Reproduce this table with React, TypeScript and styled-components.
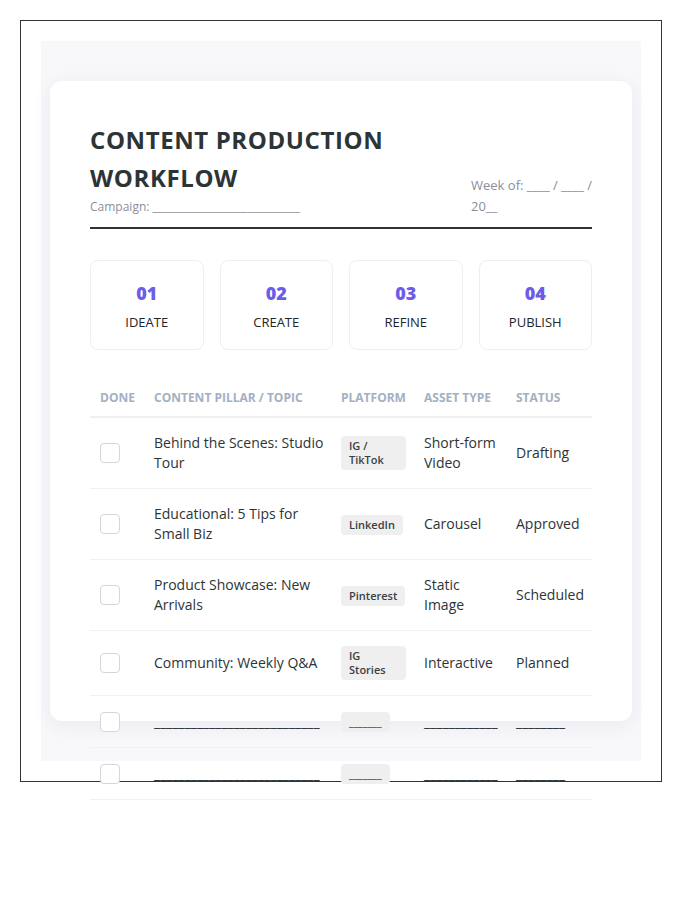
import React from "react";
import styled, { createGlobalStyle } from "styled-components";

const Global = createGlobalStyle`
  html, body { margin: 0; padding: 0; background: #ffffff; }
  body { font-family: "Open Sans", "Noto Sans", sans-serif; color: #2d3436; }
  #root { padding: 20px; }
  * { box-sizing: content-box; }
`;

const Frame = styled.div`
  width: 600px;
  padding: 20px;
  border: 1px solid #333333;
`;

const Canvas = styled.div`
  height: 640px;
  padding: 40px 9px;
  background: #f8f8fb;
`;

const Card = styled.div`
  height: 560px;
  padding: 40px;
  background: #ffffff;
  border-radius: 12px;
  box-shadow: 0 4px 20px rgba(40, 40, 80, 0.07);
`;

const Header = styled.header`
  display: flex;
  justify-content: space-between;
  align-items: flex-end;
  gap: 20px;
  padding-bottom: 10px;
  border-bottom: 2px solid #2d3436;
`;

const TitleBlock = styled.div`
  flex: 1;
`;

const Title = styled.h1`
  margin: 0;
  font-size: 24px;
  line-height: 38px;
  font-weight: 700;
  letter-spacing: 0.6px;
  color: #2d3436;
  max-width: 330px;
`;

const Meta = styled.div<{ $width?: number }>`
  font-size: 12px;
  line-height: 20px;
  color: #8a8f99;
  ${(p) => (p.$width ? `width: ${p.$width}px; font-size: 13px; line-height: 21px;` : "")}
`;

const Steps = styled.div`
  display: grid;
  grid-template-columns: repeat(4, 1fr);
  gap: 16px;
  margin-top: 31px;
`;

const Step = styled.div`
  border: 1px solid #eeeff3;
  border-radius: 8px;
  padding: 20px 0 18px;
  text-align: center;
`;

const StepNum = styled.div`
  font-size: 18px;
  line-height: 24px;
  font-weight: 800;
  color: #6c5ce7;
  margin-bottom: 8px;
`;

const StepLabel = styled.div`
  font-size: 13px;
  line-height: 18px;
  font-weight: 500;
  color: #222629;
  text-transform: uppercase;
`;

const Table = styled.table`
  width: 502px;
  margin-top: 30px;
  border-collapse: collapse;
  table-layout: fixed;
`;

const Th = styled.th`
  padding: 10px 6px 10px 10px;
  text-align: left;
  font-size: 12px;
  line-height: 16px;
  font-weight: 700;
  color: #a3b0c2;
  text-transform: uppercase;
  border-bottom: 2px solid #edf1f6;
  white-space: nowrap;
`;

const Td = styled.td`
  padding: 15px 6px 15px 10px;
  font-size: 14px;
  line-height: 20px;
  color: #2d3436;
  vertical-align: middle;
  border-bottom: 1px solid #f0f1f4;
`;

const Check = styled.div`
  width: 18px;
  height: 18px;
  border: 1px solid #d4d6da;
  border-radius: 4px;
  background: #ffffff;
`;

const Badge = styled.span`
  display: inline-block;
  max-width: 49px;
  padding: 3px 8px;
  font-size: 11px;
  line-height: 14px;
  font-weight: 600;
  color: #3a3f44;
  background: #efefef;
  border-radius: 4px;
`;

type Row = { topic: string; platform: string; asset: string; status: string };

const rows: Row[] = [
  { topic: "Behind the Scenes: Studio Tour", platform: "IG / TikTok", asset: "Short-form Video", status: "Drafting" },
  { topic: "Educational: 5 Tips for Small Biz", platform: "LinkedIn", asset: "Carousel", status: "Approved" },
  { topic: "Product Showcase: New Arrivals", platform: "Pinterest", asset: "Static Image", status: "Scheduled" },
  { topic: "Community: Weekly Q&A", platform: "IG Stories", asset: "Interactive", status: "Planned" },
  { topic: "___________________________", platform: "_______", asset: "____________", status: "________" },
  { topic: "___________________________", platform: "_______", asset: "____________", status: "________" },
];

const steps = [
  ["01", "Ideate"],
  ["02", "Create"],
  ["03", "Refine"],
  ["04", "Publish"],
];

export default function App() {
  return (
    <>
      <Global />
      <Frame>
        <Canvas>
          <Card>
            <Header>
              <TitleBlock>
                <Title>CONTENT PRODUCTION WORKFLOW</Title>
                <Meta>Campaign: ____________________________</Meta>
              </TitleBlock>
              <Meta $width={121}>Week of: ____ / ____ / 20__</Meta>
            </Header>
            <Steps>
              {steps.map(([n, l]) => (
                <Step key={n}>
                  <StepNum>{n}</StepNum>
                  <StepLabel>{l}</StepLabel>
                </Step>
              ))}
            </Steps>
            <Table>
              <colgroup>
                <col style={{ width: 54 }} />
                <col style={{ width: 187 }} />
                <col style={{ width: 83 }} />
                <col style={{ width: 92 }} />
                <col style={{ width: 86 }} />
              </colgroup>
              <thead>
                <tr>
                  <Th>Done</Th>
                  <Th>Content Pillar / Topic</Th>
                  <Th>Platform</Th>
                  <Th>Asset Type</Th>
                  <Th>Status</Th>
                </tr>
              </thead>
              <tbody>
                {rows.map((r, i) => (
                  <tr key={i}>
                    <Td><Check /></Td>
                    <Td>{r.topic}</Td>
                    <Td><Badge>{r.platform}</Badge></Td>
                    <Td>{r.asset}</Td>
                    <Td>{r.status}</Td>
                  </tr>
                ))}
              </tbody>
            </Table>
          </Card>
        </Canvas>
      </Frame>
    </>
  );
}
